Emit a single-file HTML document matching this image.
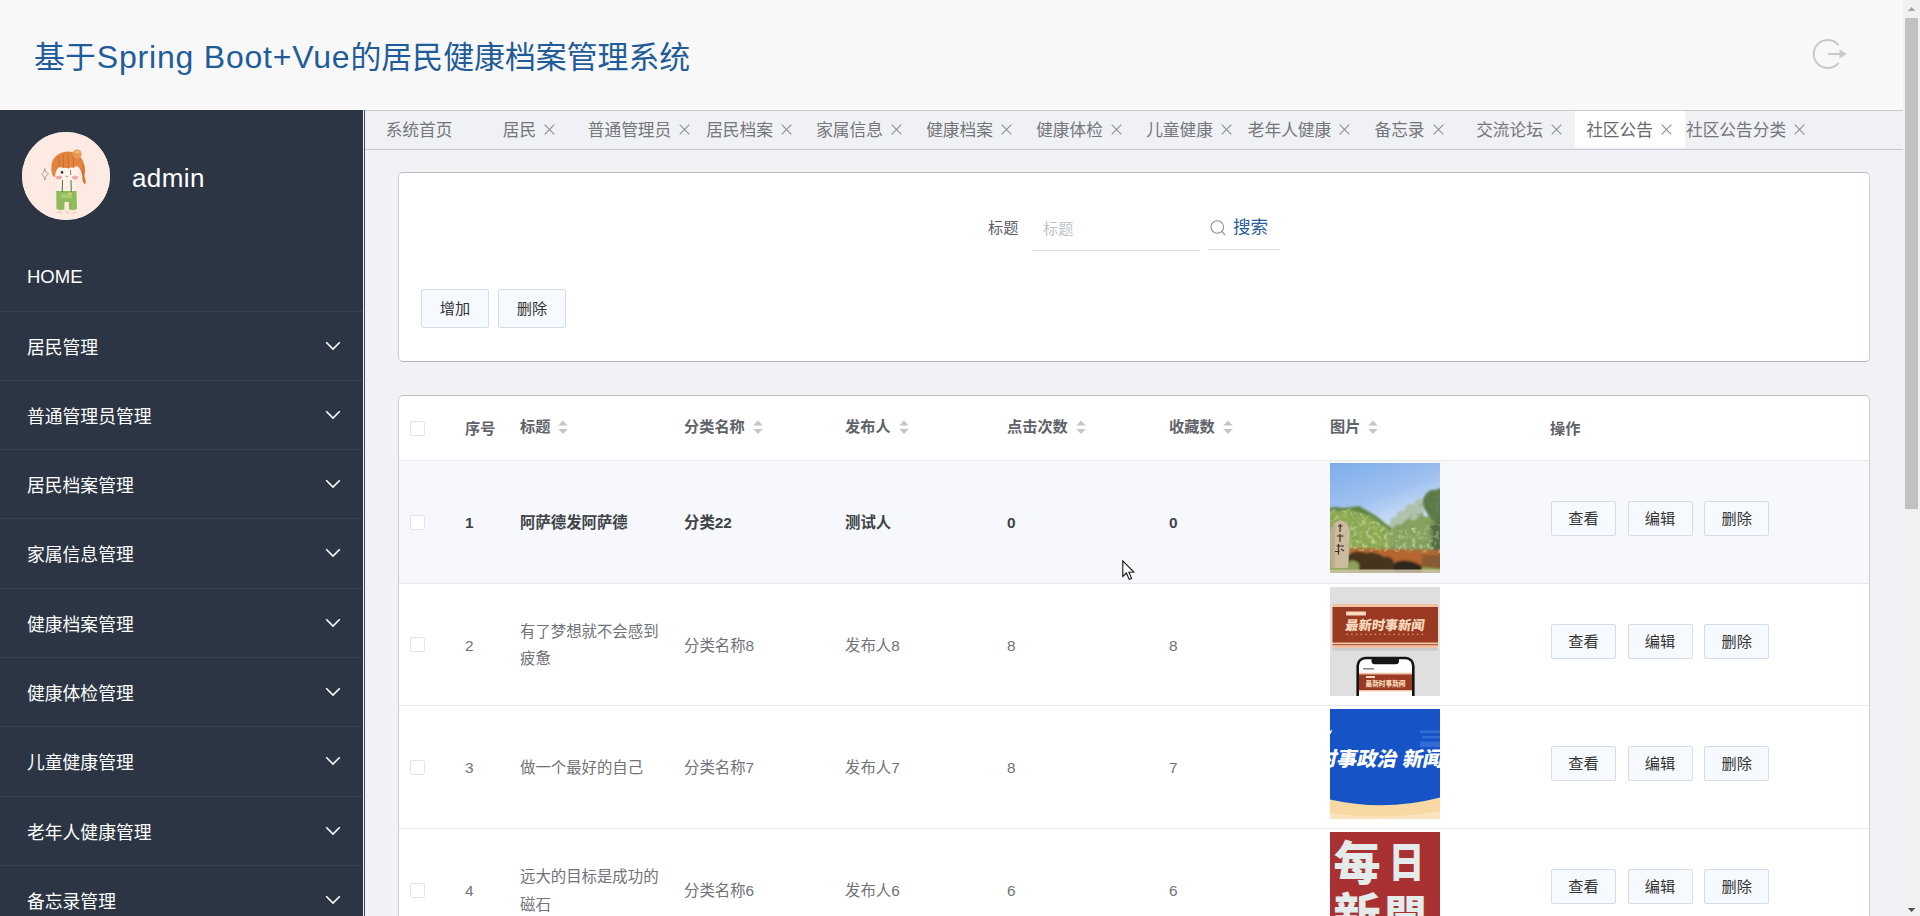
<!DOCTYPE html>
<html lang="zh-CN">
<head>
<meta charset="utf-8">
<title>基于Spring Boot+Vue的居民健康档案管理系统</title>
<style>
*{box-sizing:border-box;margin:0;padding:0}
html,body{width:1920px;height:916px;overflow:hidden}
body{position:relative;background:#f0f2f6;font-family:"Liberation Sans","Noto Sans CJK SC",sans-serif;color:#333}
.abs{position:absolute}
#header{position:absolute;left:0;top:0;width:1903px;height:110px;background:#f8f8f8}
#title{position:absolute;left:34px;top:34px;font-size:30.9px;line-height:46px;color:#1f5c99;white-space:nowrap}
#title .lat{letter-spacing:0.8px;font-size:32px;margin-left:1px}
#sidebar{position:absolute;left:0;top:110px;width:363px;height:806px;background:#2b3544;overflow:hidden}
#sidegap{position:absolute;left:363px;top:110px;width:1px;height:806px;background:#eef0f6}
#sideline{position:absolute;left:364px;top:110px;width:1px;height:806px;background:#434a57}
#avatar{position:absolute;left:22px;top:22px;width:88px;height:88px;border-radius:50%;background:#fdebe3;overflow:hidden}
#uname{position:absolute;left:132px;top:50px;font-size:26px;letter-spacing:0.4px;line-height:36px;color:#fff}
.mi{position:absolute;left:0;width:363px;height:69.33px;border-top:1px solid #364153;color:#fff;font-size:17.8px}
.mi span{position:absolute;left:27px;top:24px;line-height:24px;white-space:nowrap}
.mi svg{position:absolute;left:325px;top:29px}
#main{position:absolute;left:365px;top:110px;width:1538px;height:806px;background:#f0f2f6;overflow:hidden}
#tabs{position:absolute;left:0;top:0;width:1538px;height:40px;border-top:1px solid #c9c9c9;border-bottom:1px solid #c4c7cc;background:#f0f1f5}
.tab{position:absolute;top:0;width:110px;height:38px;text-align:center;white-space:nowrap;font-size:16.7px;line-height:40px;color:#74777c;text-indent:-2px}
.tab.on{background:linear-gradient(#fff 0,#fff 35px,#f0f1f5 38px);color:#66696e}
.tab i{font-style:normal;display:inline-block;width:11px;height:11px;margin-left:8px;position:relative;top:-1px;text-indent:0}
.card{position:absolute;background:#fff;border:1px solid #cbcdd0;border-top-color:#bbbcbf;border-bottom-color:#b3b4b7;border-radius:5px}
#sb{position:absolute;left:1903px;top:0;width:17px;height:916px;background:#f1f1f1}
#sb .th{position:absolute;left:2px;top:17px;width:13px;height:491px;background:#c1c1c1}
.home{position:absolute;left:27px;top:155px;font-size:18.5px;line-height:24px;color:#fff}

#pc{position:absolute;left:-365px;top:-110px;width:1920px;height:916px}
#c1{left:398px;top:172px;width:1472px;height:190px}
#c2{left:398px;top:395px;width:1472px;height:600px;overflow:hidden}
.lbl{position:absolute;left:988px;top:217px;font-size:15.2px;line-height:22px;color:#5a5e66;white-space:nowrap}
.inp{position:absolute;left:1032px;top:206px;width:168px;height:45px;border-bottom:1px solid #dfe1e5}
.inp span{position:absolute;left:11px;top:12px;font-size:15.2px;line-height:22px;color:#c0c4cc}
.sbtn{position:absolute;left:1208px;top:206px;width:72px;height:44px;border-bottom:1px solid #e0e2e6}
.sbtn svg{position:absolute;left:1px;top:13px}
.sbtn span{position:absolute;left:25px;top:9px;font-size:17.6px;line-height:24px;color:#2a6096;white-space:nowrap}
.btn{position:absolute;border:1px solid #d6dde8;border-radius:2px;background:#f6f9fd;color:#333;font-size:15.2px;text-align:center;white-space:nowrap}
.b1{top:289px;width:68px;height:39px;line-height:37px}
.b2{width:65px;height:35px;line-height:33px;margin-top:-0.5px}
.th{position:absolute;font-size:15.2px;font-weight:bold;color:#606369;line-height:22px;white-space:nowrap;margin-top:0.8px}
.th svg{position:absolute;left:100%;margin-left:8px;top:4px}
.cb{position:absolute;left:410px;width:15px;height:15px;border:1px solid #e1e4ea;border-radius:2px;background:#fff}
.row{position:absolute;left:399px;width:1470px;height:122.67px;border-top:1px solid #e6e8ec}
.td{position:absolute;font-size:15.4px;line-height:27.3px;color:#707378;white-space:nowrap;margin-top:0.7px}
.r1 .td{font-weight:bold;color:#404348}
.img{position:absolute;left:1330px;width:110px;height:110px;overflow:hidden}
</style>
</head>
<body>
<div id="header">
  <div id="title">基于<span class="lat">Spring Boot+Vue</span>的居民健康档案管理系统</div>
<svg id="logout" width="40" height="36" viewBox="0 0 40 36" style="position:absolute;left:1810px;top:36px"><path d="M28.6 9.2 A14 14 0 1 0 28.6 26.8" fill="none" stroke="#c9c9c9" stroke-width="2"/><path d="M18 18 H31" stroke="#c9c9c9" stroke-width="2" fill="none"/><path d="M29.5 13.6 L36.8 18 L29.5 22.4 Z" fill="#c9c9c9"/></svg>
</div>
<div id="sidebar">
  <div id="avatar"><svg width="88" height="88" viewBox="0 0 88 88">
<defs><filter id="ab" x="-20%" y="-20%" width="140%" height="140%"><feGaussianBlur stdDeviation="0.55"/></filter></defs>
<rect width="88" height="88" fill="#fdebe3"/>
<g filter="url(#ab)">
<ellipse cx="45" cy="80.5" rx="11" ry="1.6" fill="#f3d6c8"/>
<path d="M40 76 L40 81 Q40 82.5 42 82.5 L44 82.5 L44 76 Z M46.5 76 L46.5 82.5 L49 82.5 Q50.5 82.5 50.5 81 L50.5 76 Z" fill="#fbe9dc"/>
<path d="M58.5 25 Q64.5 33 62.5 44 Q64.5 50 63 52.5 Q60 50 60.3 44 Q59 38 56.5 33 Z" fill="#d97535"/>
<ellipse cx="44.5" cy="40.5" rx="11.6" ry="9.6" fill="#fef4ec"/>
<path d="M29.6 40 Q27.5 25 40 20.5 Q52 17 58.5 25.5 Q61.5 31 60 41 Q58 36 55.5 34 Q47 37.5 37.5 35 Q33.5 37 33 45 Q30.5 45 29.6 40 Z" fill="#e2843f"/><path d="M36 24 Q38 30 37 35 M41 22 Q42 29 41.5 36 M46 21.5 Q46.5 29 46.5 36.6 M51 23 Q51.5 30 51.5 36" stroke="#c96a2c" stroke-width="0.9" fill="none"/>
<circle cx="55" cy="22" r="4.6" fill="#e89a52"/>
<path d="M52 20 Q55 17 58.5 20 Q56 23 52 20 Z" fill="#f2b878"/>
<path d="M36 50 Q35 58 36.5 62 L53 62 Q54.5 58 53 50 Q49 47 44.5 47.5 Q40 47 36 50 Z" fill="#f8f1e8"/>
<path d="M34.2 59 L54.5 59 L55 77 Q52 78.5 47 77.5 L46.8 70 L42.5 70 L42.3 77.5 Q38 78.5 34.5 77 Z" fill="#8fbb5c"/>
<path d="M39 62 L50 62 L50 66 L39 66 Z" fill="#a7c96f"/>
<path d="M46.5 60.5 L49.5 60.5 L49.5 63 L46.5 63 Z" fill="#e8c860"/>
<path d="M40.5 48 L40.2 60 M49 48 L49.3 60" stroke="#5d6b45" stroke-width="1" fill="none"/>
<path d="M41 50 Q42.5 44 44.5 49 Q46.5 44 48 50 L47 55 L42 55 Z" fill="#fdf0e6"/>
<ellipse cx="37" cy="45.5" rx="3" ry="1.9" fill="#f6a5a5"/>
<ellipse cx="53" cy="45.5" rx="3" ry="1.9" fill="#f6a5a5"/>
<ellipse cx="40" cy="40.3" rx="1.3" ry="1.5" fill="#3a3a30"/>
<path d="M48.5 38 L48.8 43" stroke="#6a6458" stroke-width="0.8" fill="none"/>
<path d="M43.5 44 Q45 45.5 46 44" stroke="#9a6a58" stroke-width="0.7" fill="none"/>
<path d="M22.8 36.5 Q23.3 41 26.5 42 Q23.3 43 22.8 48 Q22.3 43 19.6 42 Q22.3 41 22.8 36.5 Z" fill="#fdebe3" stroke="#8a8a88" stroke-width="0.7"/>
</g>
</svg></div>
  <div id="uname">admin</div>
  <div class="home">HOME</div>
  <div class="mi" style="top:200.50px"><span>居民管理</span><svg width="16" height="10" viewBox="0 0 16 10"><path d="M1.2 1.2 L8 8 L14.8 1.2" fill="none" stroke="#fff" stroke-width="1.6"/></svg></div>
  <div class="mi" style="top:269.83px"><span>普通管理员管理</span><svg width="16" height="10" viewBox="0 0 16 10"><path d="M1.2 1.2 L8 8 L14.8 1.2" fill="none" stroke="#fff" stroke-width="1.6"/></svg></div>
  <div class="mi" style="top:339.16px"><span>居民档案管理</span><svg width="16" height="10" viewBox="0 0 16 10"><path d="M1.2 1.2 L8 8 L14.8 1.2" fill="none" stroke="#fff" stroke-width="1.6"/></svg></div>
  <div class="mi" style="top:408.49px"><span>家属信息管理</span><svg width="16" height="10" viewBox="0 0 16 10"><path d="M1.2 1.2 L8 8 L14.8 1.2" fill="none" stroke="#fff" stroke-width="1.6"/></svg></div>
  <div class="mi" style="top:477.82px"><span>健康档案管理</span><svg width="16" height="10" viewBox="0 0 16 10"><path d="M1.2 1.2 L8 8 L14.8 1.2" fill="none" stroke="#fff" stroke-width="1.6"/></svg></div>
  <div class="mi" style="top:547.15px"><span>健康体检管理</span><svg width="16" height="10" viewBox="0 0 16 10"><path d="M1.2 1.2 L8 8 L14.8 1.2" fill="none" stroke="#fff" stroke-width="1.6"/></svg></div>
  <div class="mi" style="top:616.48px"><span>儿童健康管理</span><svg width="16" height="10" viewBox="0 0 16 10"><path d="M1.2 1.2 L8 8 L14.8 1.2" fill="none" stroke="#fff" stroke-width="1.6"/></svg></div>
  <div class="mi" style="top:685.81px"><span>老年人健康管理</span><svg width="16" height="10" viewBox="0 0 16 10"><path d="M1.2 1.2 L8 8 L14.8 1.2" fill="none" stroke="#fff" stroke-width="1.6"/></svg></div>
  <div class="mi" style="top:755.14px"><span>备忘录管理</span><svg width="16" height="10" viewBox="0 0 16 10"><path d="M1.2 1.2 L8 8 L14.8 1.2" fill="none" stroke="#fff" stroke-width="1.6"/></svg></div>
</div>
<div id="sidegap"></div><div id="sideline"></div>
<div id="main">
  <div id="tabs">
<div class="tab" style="left:0px">系统首页</div>
<div class="tab" style="left:110px">居民<i><svg width="11" height="11" viewBox="0 0 11 11"><path d="M0.7 0.7 L10.3 10.3 M10.3 0.7 L0.7 10.3" stroke="#8a8d92" stroke-width="1.1" fill="none"/></svg></i></div>
<div class="tab" style="left:220px">普通管理员<i><svg width="11" height="11" viewBox="0 0 11 11"><path d="M0.7 0.7 L10.3 10.3 M10.3 0.7 L0.7 10.3" stroke="#8a8d92" stroke-width="1.1" fill="none"/></svg></i></div>
<div class="tab" style="left:330px">居民档案<i><svg width="11" height="11" viewBox="0 0 11 11"><path d="M0.7 0.7 L10.3 10.3 M10.3 0.7 L0.7 10.3" stroke="#8a8d92" stroke-width="1.1" fill="none"/></svg></i></div>
<div class="tab" style="left:440px">家属信息<i><svg width="11" height="11" viewBox="0 0 11 11"><path d="M0.7 0.7 L10.3 10.3 M10.3 0.7 L0.7 10.3" stroke="#8a8d92" stroke-width="1.1" fill="none"/></svg></i></div>
<div class="tab" style="left:550px">健康档案<i><svg width="11" height="11" viewBox="0 0 11 11"><path d="M0.7 0.7 L10.3 10.3 M10.3 0.7 L0.7 10.3" stroke="#8a8d92" stroke-width="1.1" fill="none"/></svg></i></div>
<div class="tab" style="left:660px">健康体检<i><svg width="11" height="11" viewBox="0 0 11 11"><path d="M0.7 0.7 L10.3 10.3 M10.3 0.7 L0.7 10.3" stroke="#8a8d92" stroke-width="1.1" fill="none"/></svg></i></div>
<div class="tab" style="left:770px">儿童健康<i><svg width="11" height="11" viewBox="0 0 11 11"><path d="M0.7 0.7 L10.3 10.3 M10.3 0.7 L0.7 10.3" stroke="#8a8d92" stroke-width="1.1" fill="none"/></svg></i></div>
<div class="tab" style="left:880px">老年人健康<i><svg width="11" height="11" viewBox="0 0 11 11"><path d="M0.7 0.7 L10.3 10.3 M10.3 0.7 L0.7 10.3" stroke="#8a8d92" stroke-width="1.1" fill="none"/></svg></i></div>
<div class="tab" style="left:990px">备忘录<i><svg width="11" height="11" viewBox="0 0 11 11"><path d="M0.7 0.7 L10.3 10.3 M10.3 0.7 L0.7 10.3" stroke="#8a8d92" stroke-width="1.1" fill="none"/></svg></i></div>
<div class="tab" style="left:1100px">交流论坛<i><svg width="11" height="11" viewBox="0 0 11 11"><path d="M0.7 0.7 L10.3 10.3 M10.3 0.7 L0.7 10.3" stroke="#8a8d92" stroke-width="1.1" fill="none"/></svg></i></div>
<div class="tab on" style="left:1210px">社区公告<i><svg width="11" height="11" viewBox="0 0 11 11"><path d="M0.7 0.7 L10.3 10.3 M10.3 0.7 L0.7 10.3" stroke="#8a8d92" stroke-width="1.1" fill="none"/></svg></i></div>
<div class="tab" style="left:1320px;text-indent:1px">社区公告分类<i><svg width="11" height="11" viewBox="0 0 11 11"><path d="M0.7 0.7 L10.3 10.3 M10.3 0.7 L0.7 10.3" stroke="#8a8d92" stroke-width="1.1" fill="none"/></svg></i></div>
</div>
<div id="pc">
<div class="card" id="c1"></div>
<div class="lbl">标题</div>
<div class="inp"><span>标题</span></div>
<div class="sbtn"><svg width="18" height="18" viewBox="0 0 18 18"><circle cx="8.3" cy="8" r="6.3" fill="none" stroke="#8a8d92" stroke-width="1.1"/><path d="M12.8 12.6 L16 15.8" stroke="#8a8d92" stroke-width="1.2" fill="none"/></svg><span>搜索</span></div>
<div class="btn b1" style="left:421px">增加</div>
<div class="btn b1" style="left:498px">删除</div>
<div class="card" id="c2"></div>
<div class="cb" style="top:421px"></div>
<div class="th" style="left:465px;top:417px">序号</div>
<div class="th" style="left:520px;top:415px">标题<svg width="10" height="16" viewBox="0 0 10 16"><path d="M0.3 5.6 L5 0.6 L9.7 5.6 Z" fill="#c3c5ca"/><path d="M0.3 9 L5 14 L9.7 9 Z" fill="#c3c5ca"/></svg></div>
<div class="th" style="left:684px;top:415px">分类名称<svg width="10" height="16" viewBox="0 0 10 16"><path d="M0.3 5.6 L5 0.6 L9.7 5.6 Z" fill="#c3c5ca"/><path d="M0.3 9 L5 14 L9.7 9 Z" fill="#c3c5ca"/></svg></div>
<div class="th" style="left:845px;top:415px">发布人<svg width="10" height="16" viewBox="0 0 10 16"><path d="M0.3 5.6 L5 0.6 L9.7 5.6 Z" fill="#c3c5ca"/><path d="M0.3 9 L5 14 L9.7 9 Z" fill="#c3c5ca"/></svg></div>
<div class="th" style="left:1007px;top:415px">点击次数<svg width="10" height="16" viewBox="0 0 10 16"><path d="M0.3 5.6 L5 0.6 L9.7 5.6 Z" fill="#c3c5ca"/><path d="M0.3 9 L5 14 L9.7 9 Z" fill="#c3c5ca"/></svg></div>
<div class="th" style="left:1169px;top:415px">收藏数<svg width="10" height="16" viewBox="0 0 10 16"><path d="M0.3 5.6 L5 0.6 L9.7 5.6 Z" fill="#c3c5ca"/><path d="M0.3 9 L5 14 L9.7 9 Z" fill="#c3c5ca"/></svg></div>
<div class="th" style="left:1330px;top:415px">图片<svg width="10" height="16" viewBox="0 0 10 16"><path d="M0.3 5.6 L5 0.6 L9.7 5.6 Z" fill="#c3c5ca"/><path d="M0.3 9 L5 14 L9.7 9 Z" fill="#c3c5ca"/></svg></div>
<div class="th" style="left:1550px;top:417px">操作</div>
<div class="row r1" style="top:460.00px;background:#f6f8fb;"></div>
<div class="cb" style="top:514.50px"></div>
<div class="r1"><div class="td" style="left:465px;top:508.35px">1</div><div class="td" style="left:520px;top:508.35px">阿萨德发阿萨德</div><div class="td" style="left:684px;top:508.35px">分类22</div><div class="td" style="left:845px;top:508.35px">测试人</div><div class="td" style="left:1007px;top:508.35px">0</div><div class="td" style="left:1169px;top:508.35px">0</div></div>
<div class="img" id="im1" style="top:463px"><svg width="110" height="110" viewBox="0 0 110 110">
<defs><linearGradient id="sky" x1="0" y1="0" x2="0.35" y2="1"><stop offset="0" stop-color="#7badea"/><stop offset="0.4" stop-color="#9fc1f0"/><stop offset="0.7" stop-color="#d3e2f6"/></linearGradient>
<filter id="b1" x="-10%" y="-10%" width="120%" height="120%"><feGaussianBlur stdDeviation="0.9"/></filter>
<filter id="b2" x="-10%" y="-10%" width="120%" height="120%"><feGaussianBlur stdDeviation="0.5"/></filter>
<filter id="nz" x="0" y="0" width="100%" height="100%"><feTurbulence type="fractalNoise" baseFrequency="0.22" numOctaves="2" seed="7" result="t"/><feColorMatrix in="t" type="matrix" values="0 0 0 0 0.95  0 0 0 0 1  0 0 0 0 0.75  0 0 0 2.6 -1.25" result="c"/><feComposite in="c" in2="SourceGraphic" operator="in"/><feGaussianBlur stdDeviation="0.5"/></filter>
<filter id="nd" x="0" y="0" width="100%" height="100%"><feTurbulence type="fractalNoise" baseFrequency="0.18" numOctaves="2" seed="21" result="t"/><feColorMatrix in="t" type="matrix" values="0 0 0 0 0.16  0 0 0 0 0.28  0 0 0 0 0.12  0 0 0 2.6 -1.3" result="c"/><feComposite in="c" in2="SourceGraphic" operator="in"/><feGaussianBlur stdDeviation="0.5"/></filter>
</defs>
<rect width="110" height="110" fill="url(#sky)"/>
<g filter="url(#b1)">
<path d="M58 66 Q60 52 66 54 Q68 46 74 48 Q77 38 84 42 Q86 34 92 36 L96 70 L58 80 Z" fill="#a9bd9a" opacity="0.8"/>
<path d="M-2 45 L6 44 L14 45 L22 44 L29 43 L36 47 L46 53 L56 61 L64 67 L112 74 L112 112 L-2 112 Z" fill="#5f8440"/>
<path d="M-2 49 L22 47 L36 52 L50 60 L64 70 L112 78 L112 112 L-2 112 Z" fill="#8eab52"/>
<path d="M60 70 Q66 58 72 62 Q78 52 84 58 Q90 50 96 54 L112 52 L112 100 L60 100 Z" fill="#86a35e"/>
<path d="M93 36 Q98 25 106 27 Q110 24 112 26 L112 62 Q102 60 97 50 Q92 44 93 36 Z" fill="#5b7a46"/>
<path d="M100 62 Q106 58 112 60 L112 98 L102 98 Z" fill="#4f6d3d"/>
<path d="M20 85 L112 87 L112 104 L18 104 Z" fill="#b5652f"/>
<path d="M18 92 Q26 86 36 90 Q46 88 54 94 Q62 92 64 100 L64 108 L18 108 Z" fill="#45341f"/>
<path d="M64 100 Q76 94 92 103 L92 110 L64 110 Z" fill="#2e281b"/>
<path d="M92 92 L112 92 L112 106 L92 104 Z" fill="#8a5a30"/>
<path d="M18 99 Q24 95 29 101 L29 108 L18 108 Z" fill="#8f9e5a"/>
</g>
<path d="M-2 47 L22 45 L36 50 L50 58 L64 68 L112 60 L112 90 L20 88 L20 60 L-2 58 Z" fill="#fff" filter="url(#nz)" opacity="0.55"/>
<path d="M-2 47 L22 45 L36 50 L50 58 L64 68 L92 40 L112 28 L112 92 L20 88 L20 60 L-2 58 Z" fill="#fff" filter="url(#nd)" opacity="0.5"/>
<g filter="url(#b2)">
<path d="M1 105 L0 70 Q2 58 10 57.5 Q19 58 20 70 L18 105 Z" fill="#cbbb9f"/>
<path d="M1 105 L0 70 Q2 60 5 58.5 L5 105 Z" fill="#b3a386" opacity="0.6"/>
<path d="M8 63 L12.5 63 M10.3 61 L10 69 M7 73 L13.5 73 M10 71 L10 79 M6.5 83 L14 83 M5 88.5 L9.5 88.5 M8.5 81 L8.5 91.5 M11 86 L14 88" stroke="#3b3024" stroke-width="1.2" fill="none"/>
<rect x="0" y="106.5" width="110" height="3.5" fill="#cbbfa8" opacity="0.85"/>
</g>
</svg></div>
<div class="btn b2" style="left:1551px;top:501.50px">查看</div><div class="btn b2" style="left:1627.5px;top:501.50px">编辑</div><div class="btn b2" style="left:1704.3px;top:501.50px">删除</div>
<div class="row r2" style="top:582.67px;"></div>
<div class="cb" style="top:637.17px"></div>
<div class="r2"><div class="td" style="left:465px;top:631.02px">2</div><div class="td" style="left:520px;top:617.37px">有了梦想就不会感到<br>疲惫</div><div class="td" style="left:684px;top:631.02px">分类名称8</div><div class="td" style="left:845px;top:631.02px">发布人8</div><div class="td" style="left:1007px;top:631.02px">8</div><div class="td" style="left:1169px;top:631.02px">8</div></div>
<div class="img" id="im2" style="top:587px;height:109px"><svg width="110" height="109" viewBox="0 0 110 109">
<rect width="110" height="109" fill="#dfdfdf"/>
<rect x="2.5" y="61" width="105.5" height="2.5" fill="#c9c9c9"/>
<rect x="2.5" y="17" width="105.5" height="44" fill="#f2c3a3"/>
<rect x="2.5" y="20" width="105.5" height="35.5" fill="#9a3a22"/>
<rect x="2.5" y="57.3" width="105.5" height="0.9" fill="#9a3a22"/>
<rect x="16" y="24.6" width="20" height="4" rx="0.8" fill="#f6d9bc"/>
<text x="15.5" y="42.8" font-size="13.2" font-weight="900" fill="#f6d9bc" font-family="Liberation Sans, Noto Sans CJK SC, sans-serif" transform="skewX(-8)" transform-origin="55 38" textLength="79" lengthAdjust="spacingAndGlyphs">最新时事新闻</text>
<path d="M16.5 47.3 H94" stroke="#e9b99a" stroke-width="1.1" stroke-dasharray="1.4 3.3" fill="none"/>
<rect x="26.4" y="69.8" width="58.2" height="60" rx="9" fill="#141414"/>
<rect x="29" y="72.3" width="53" height="60" rx="6.5" fill="#fdfdfd"/>
<path d="M41.5 72 H69 V74 Q69 77.3 65.5 77.3 H45 Q41.5 77.3 41.5 74 Z" fill="#141414"/>
<rect x="33" y="81" width="11" height="1.6" fill="#888"/>
<rect x="29" y="85.8" width="53" height="1.6" fill="#f2c3a3"/>
<rect x="29" y="87.4" width="53" height="15.6" fill="#9a3a22"/>
<rect x="36" y="89" width="9" height="2" fill="#f6d9bc"/>
<text x="35.5" y="98.6" font-size="6.8" font-weight="900" fill="#f6d9bc" font-family="Liberation Sans, Noto Sans CJK SC, sans-serif" textLength="40" lengthAdjust="spacingAndGlyphs">最新时事新闻</text>
<path d="M36 100.6 H75" stroke="#e9b99a" stroke-width="0.6" stroke-dasharray="0.8 1.8" fill="none"/>
<rect x="29" y="103" width="53" height="1.4" fill="#f2c3a3"/>
</svg></div>
<div class="btn b2" style="left:1551px;top:624.17px">查看</div><div class="btn b2" style="left:1627.5px;top:624.17px">编辑</div><div class="btn b2" style="left:1704.3px;top:624.17px">删除</div>
<div class="row r3" style="top:705.34px;"></div>
<div class="cb" style="top:759.84px"></div>
<div class="r3"><div class="td" style="left:465px;top:753.69px">3</div><div class="td" style="left:520px;top:753.69px">做一个最好的自己</div><div class="td" style="left:684px;top:753.69px">分类名称7</div><div class="td" style="left:845px;top:753.69px">发布人7</div><div class="td" style="left:1007px;top:753.69px">8</div><div class="td" style="left:1169px;top:753.69px">7</div></div>
<div class="img" id="im3" style="top:709px"><svg width="110" height="110" viewBox="0 0 110 110">
<rect width="110" height="110" fill="#1553c7"/>
<path d="M0 90.5 Q55 103 110 88.5 L110 110 L0 110 Z" fill="#f9d9a3"/>
<path d="M0 104 Q55 112 110 102 L110 110 L0 110 Z" fill="#fbe4bd"/>
<g fill="#3f75dc" opacity="0.75"><rect x="90" y="21.5" width="20" height="2.6"/><rect x="92" y="27" width="18" height="2.4"/><rect x="90" y="32.5" width="20" height="5.5"/></g>
<path d="M0 22 L2.4 20.6 L0.8 24.8 L0 25 Z" fill="#fff"/>
<g font-size="20" font-weight="900" fill="#fff" font-family="Liberation Sans, Noto Sans CJK SC, sans-serif" transform="translate(0 0) skewX(-12)" transform-origin="55 50">
<text x="-12.5" y="57.5" textLength="80.5" lengthAdjust="spacingAndGlyphs">时事政治</text>
<text x="73.4" y="57.5" textLength="40.5" lengthAdjust="spacingAndGlyphs">新闻</text>
</g>
</svg></div>
<div class="btn b2" style="left:1551px;top:746.84px">查看</div><div class="btn b2" style="left:1627.5px;top:746.84px">编辑</div><div class="btn b2" style="left:1704.3px;top:746.84px">删除</div>
<div class="row r4" style="top:828.01px;"></div>
<div class="cb" style="top:882.51px"></div>
<div class="r4"><div class="td" style="left:465px;top:876.36px">4</div><div class="td" style="left:520px;top:862.71px">远大的目标是成功的<br>磁石</div><div class="td" style="left:684px;top:876.36px">分类名称6</div><div class="td" style="left:845px;top:876.36px">发布人6</div><div class="td" style="left:1007px;top:876.36px">6</div><div class="td" style="left:1169px;top:876.36px">6</div></div>
<div class="img" id="im4" style="top:832px"><svg width="110" height="110" viewBox="0 0 110 110">
<rect width="110" height="110" fill="#a93132"/>
<g font-weight="900" fill="#e3ecea" font-family="Liberation Sans, Noto Sans CJK SC, sans-serif">
<text x="3.5" y="47.5" font-size="47">每</text>
<text x="58.5" y="45" font-size="41" textLength="36" lengthAdjust="spacingAndGlyphs">日</text>
<text x="3.5" y="100" font-size="47">新</text>
<text x="54.5" y="101" font-size="44" textLength="42" lengthAdjust="spacingAndGlyphs">聞</text>
</g>
</svg></div>
<div class="btn b2" style="left:1551px;top:869.51px">查看</div><div class="btn b2" style="left:1627.5px;top:869.51px">编辑</div><div class="btn b2" style="left:1704.3px;top:869.51px">删除</div>
</div>
</div>
<div id="sb"><div class="th"></div><svg width="17" height="17" viewBox="0 0 17 17" style="position:absolute;left:0;top:0"><path d="M4.8 11 L8.6 7 L12.4 11 Z" fill="#a3a3a3"/></svg><svg width="17" height="17" viewBox="0 0 17 17" style="position:absolute;left:0;top:899px"><path d="M4.8 9 L8.6 13 L12.4 9 Z" fill="#505050"/></svg></div>
<svg width="14" height="22" viewBox="0 0 14 22" style="position:absolute;left:1121.5px;top:560px"><path d="M0.8 0.9 L0.8 16.4 L4.4 13 L7.2 19.4 L9.6 18.4 L6.9 12.2 L11.8 12 Z" fill="#fff" stroke="#111" stroke-width="1.1" stroke-linejoin="miter"/></svg>
</body>
</html>
